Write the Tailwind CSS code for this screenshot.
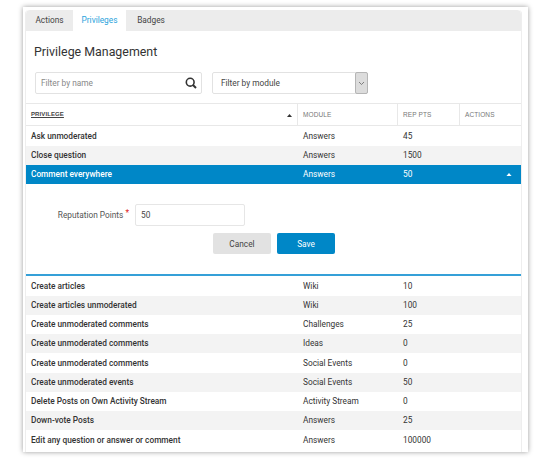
<!DOCTYPE html>
<html>
<head>
<script src="https://cdn.jsdelivr.net/npm/@tailwindcss/browser@4"></script>
</head>
<body class="bg-white font-['Roboto','Liberation_Sans',sans-serif] text-[8.3px] text-[#333]">
<div class="w-[550px] h-[460px] overflow-hidden pt-[7px] pl-[23px]">
  <div class="w-[505px] h-[445px] bg-white shadow-[0_0_5px_rgba(0,0,0,0.4)] pt-[3px] pl-[2px]">
    <div class="w-[497px] h-[442px] border-x border-[#eeeeee] rounded-t overflow-hidden">
      <div class="flex h-[21px] bg-[#ececec] rounded-t text-[#444]">
        <div class="w-[47px] flex items-center justify-center">Actions</div>
        <div class="w-[53px] flex items-center justify-center bg-white text-[#29a3dc]">Privileges</div>
        <div class="w-[50px] flex items-center justify-center">Badges</div>
      </div>
      <h1 class="h-[41px] pl-[8px] pt-[12px] text-[12.4px] leading-[18px] text-[#333]">Privilege Management</h1>
      <div class="flex h-[31px] pl-[9px] gap-[10px]">
        <div class="w-[167px] h-[22px] border border-[#e2e2e2] rounded-[2px] flex items-center justify-between pl-[5px] pr-[4px] text-[#888]">
          <span>Filter by name</span>
          <svg width="12" height="12" viewBox="0 0 12 12" fill="none" stroke="#333" stroke-width="1.6"><circle cx="5.2" cy="5.2" r="3.9"/><path d="M8 8l3 3" stroke-width="2"/></svg>
        </div>
        <div class="w-[156px] h-[22px] border border-[#e2e2e2] rounded-[2px] flex items-center justify-between pl-[8px] text-[#444]">
          <span>Filter by module</span>
          <span class="w-[13px] h-[22px] -mr-px bg-[#dcdcdc] border border-[#b5b5b5] rounded-[2px] flex items-center justify-center">
            <svg width="7" height="5" viewBox="0 0 7 5" fill="none" stroke="#666" stroke-width="0.8"><path d="M1 1l2.5 2.5L6 1"/></svg>
          </span>
        </div>
      </div>
      <div class="flex h-[23px] border-y border-[#e8e8e8] items-center tracking-[0.1px] text-[#777] font-['Liberation_Sans',sans-serif]">
        <div class="w-[272px] h-full pl-[5px] pr-[5px] flex items-center justify-between border-r border-[#e8e8e8]">
          <span class="underline font-bold text-[#444] text-[6px]">PRIVILEGE</span>
          <svg width="5" height="3" viewBox="0 0 5 3" fill="#333" class="mt-[2px]"><path d="M2.5 0L5 3H0z"/></svg>
        </div>
        <div class="w-[100px] h-full pl-[5px] flex items-center border-r border-[#e8e8e8] text-[6.5px]">MODULE</div>
        <div class="w-[62px] h-full pl-[5px] flex items-center border-r border-[#e8e8e8] text-[6.5px]">REP PTS</div>
        <div class="pl-[5px] text-[6.5px]">ACTIONS</div>
      </div>
      <div class="flex h-[19.5px] items-center"><div class="w-[272px] pl-[5px] font-medium">Ask unmoderated</div><div class="w-[100px] pl-[5px]">Answers</div><div class="pl-[5px]">45</div></div>
      <div class="flex h-[19.25px] items-center bg-[#f3f3f3]"><div class="w-[272px] pl-[5px] font-medium">Close question</div><div class="w-[100px] pl-[5px]">Answers</div><div class="pl-[5px]">1500</div></div>
      <div class="flex h-[19.5px] items-center bg-[#0087c7] text-white"><div class="w-[272px] pl-[5px] font-medium">Comment everywhere</div><div class="w-[100px] pl-[5px]">Answers</div><div class="w-[62px] pl-[5px]">50</div><div class="flex-1 flex justify-end pr-[9px]"><svg width="6" height="3.5" viewBox="0 0 6 3.5" fill="#fff"><path d="M3 0l3 3.5H0z"/></svg></div></div>
      <div class="h-[92px] border-b-2 border-[#35a0d8] flex flex-col">
        <div class="flex items-center h-[22px] mt-[20px]">
          <div class="w-[109px] text-right text-[#555] pr-[6px]">Reputation Points <span class="text-[#e02020] relative -top-[2px]">*</span></div>
          <div class="w-[110px] h-[22px] border border-[#e6e6e6] rounded-[2px] flex items-center pl-[5px] text-[#444]">50</div>
        </div>
        <div class="flex gap-[6px] mt-[7px] pl-[187px]">
          <div class="w-[58px] h-[21px] bg-[#e2e2e2] rounded-[2px] flex items-center justify-center text-[#444]">Cancel</div>
          <div class="w-[58px] h-[21px] bg-[#0087c7] rounded-[2px] flex items-center justify-center text-white">Save</div>
        </div>
      </div>
      <div class="flex h-[19.25px] items-center"><div class="w-[272px] pl-[5px] font-medium">Create articles</div><div class="w-[100px] pl-[5px]">Wiki</div><div class="pl-[5px]">10</div></div>
      <div class="flex h-[19.25px] items-center bg-[#f3f3f3]"><div class="w-[272px] pl-[5px] font-medium">Create articles unmoderated</div><div class="w-[100px] pl-[5px]">Wiki</div><div class="pl-[5px]">100</div></div>
      <div class="flex h-[19.25px] items-center"><div class="w-[272px] pl-[5px] font-medium">Create unmoderated comments</div><div class="w-[100px] pl-[5px]">Challenges</div><div class="pl-[5px]">25</div></div>
      <div class="flex h-[19.25px] items-center bg-[#f3f3f3]"><div class="w-[272px] pl-[5px] font-medium">Create unmoderated comments</div><div class="w-[100px] pl-[5px]">Ideas</div><div class="pl-[5px]">0</div></div>
      <div class="flex h-[19.25px] items-center"><div class="w-[272px] pl-[5px] font-medium">Create unmoderated comments</div><div class="w-[100px] pl-[5px]">Social Events</div><div class="pl-[5px]">0</div></div>
      <div class="flex h-[19.25px] items-center bg-[#f3f3f3]"><div class="w-[272px] pl-[5px] font-medium">Create unmoderated events</div><div class="w-[100px] pl-[5px]">Social Events</div><div class="pl-[5px]">50</div></div>
      <div class="flex h-[19.25px] items-center"><div class="w-[272px] pl-[5px] font-medium">Delete Posts on Own Activity Stream</div><div class="w-[100px] pl-[5px]">Activity Stream</div><div class="pl-[5px]">0</div></div>
      <div class="flex h-[19.25px] items-center bg-[#f3f3f3]"><div class="w-[272px] pl-[5px] font-medium">Down-vote Posts</div><div class="w-[100px] pl-[5px]">Answers</div><div class="pl-[5px]">25</div></div>
      <div class="flex h-[19.25px] items-center"><div class="w-[272px] pl-[5px] font-medium">Edit any question or answer or comment</div><div class="w-[100px] pl-[5px]">Answers</div><div class="pl-[5px]">100000</div></div>
    </div>
  </div>
</div>
</body>
</html>
